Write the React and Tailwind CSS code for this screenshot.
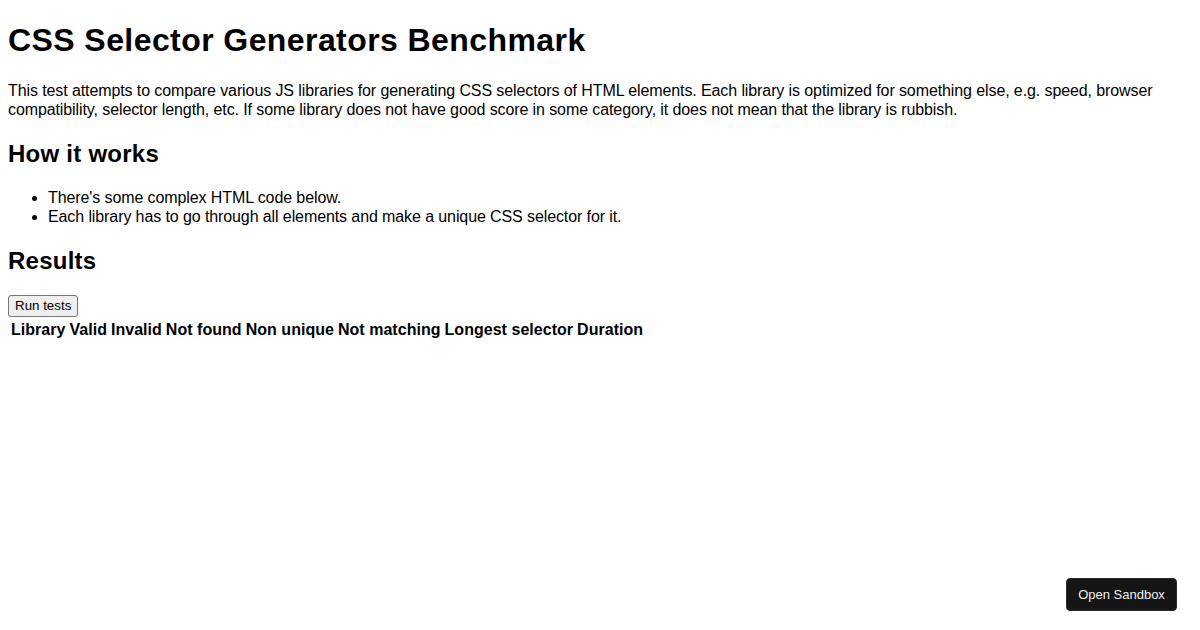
export default function App() {
  const cols = ['Library', 'Valid', 'Invalid', 'Not found', 'Non unique', 'Not matching', 'Longest selector', 'Duration'];
  return (
    <div className="min-h-screen bg-white px-2 pb-2 text-black text-[16px] leading-[1.2] font-['Liberation_Sans',Arial,sans-serif]">
      <h1 className="pt-[21.44px] mb-[21.44px] text-[32px] font-bold leading-[1.2] tracking-[0.42px]">CSS Selector Generators Benchmark</h1>
      <p className="mb-[16px] tracking-[-0.1px]">
        This test attempts to compare various JS libraries for generating CSS selectors of HTML elements. Each library is optimized for something else, e.g. speed, browser compatibility, selector length, etc. If some library does not have good score in some category, it does not mean that the library is rubbish.
      </p>
      <h2 className="mt-[19.92px] mb-[19.92px] text-[24px] font-bold leading-[1.2] tracking-[0.25px]">How it works</h2>
      <ul className="list-disc pl-10 tracking-[-0.1px]">
        <li>There's some complex HTML code below.</li>
        <li>Each library has to go through all elements and make a unique CSS selector for it.</li>
      </ul>
      <h2 className="mt-[19.92px] mb-[19.92px] text-[24px] font-bold leading-[1.2] tracking-[0.25px]">Results</h2>
      <div className="leading-none">
        <button className="bg-[#efefef] border border-[#767676] rounded-[3px] px-[6px] py-[2px] text-[13.33px] leading-[1.2] text-black">Run tests</button>
      </div>
      <table className="border-separate border-spacing-[2px]">
        <thead>
          <tr>
            {cols.map((c) => (
              <th key={c} className="p-px font-bold leading-[1.2] tracking-[0.03px]">{c}</th>
            ))}
          </tr>
        </thead>
      </table>
      <button className="fixed bottom-[19px] right-[23px] h-[33px] w-[111px] rounded-[4px] bg-[#151515] border border-[#2a2a2a] text-[13px] text-[#f0f0f0] font-['Liberation_Sans',Arial,sans-serif]">Open Sandbox</button>
    </div>
  );
}
